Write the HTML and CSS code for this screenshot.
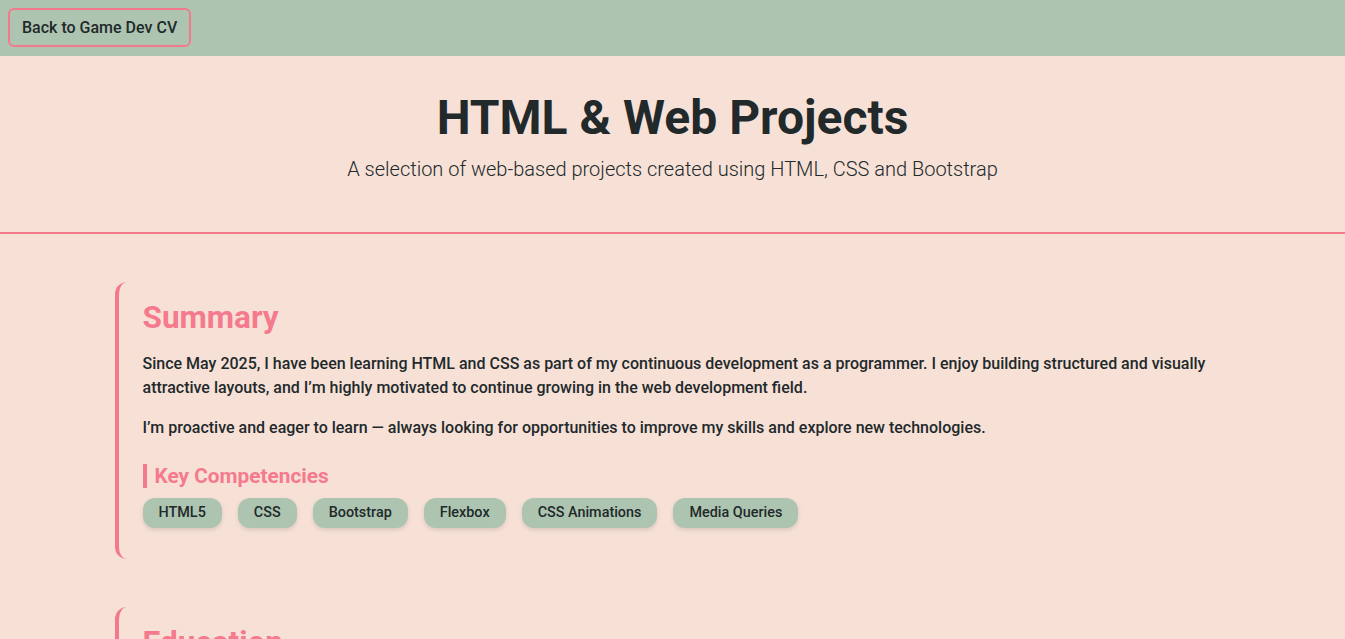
FILE: index.html
```html
<!DOCTYPE html>
<html lang="en">
<head>
    <meta charset="UTF-8">
    <meta name="viewport" content="width=device-width, initial-scale=1.0">
    <title>HTML &amp; Web Projects</title>
    <link rel="stylesheet" href="styles.css">
</head>
<body>
    <!-- Top bar -->
    <nav class="top-bar">
        <a href="#" class="back-btn">Back to Game Dev CV</a>
    </nav>

    <!-- Page header -->
    <header class="page-header">
        <h1>HTML &amp; Web Projects</h1>
        <p class="lead">A selection of web-based projects created using HTML, CSS and Bootstrap</p>
    </header>

    <main class="container">
        <!-- Summary -->
        <section class="cv-section">
            <h2>Summary</h2>
            <p>Since May 2025, I have been learning HTML and CSS as part of my continuous development as a programmer. I enjoy building structured and visually attractive layouts, and I’m highly motivated to continue growing in the web development field.</p>
            <p>I’m proactive and eager to learn — always looking for opportunities to improve my skills and explore new technologies.</p>

            <h3>Key Competencies</h3>
            <ul class="tags">
                <li>HTML5</li>
                <li>CSS</li>
                <li>Bootstrap</li>
                <li>Flexbox</li>
                <li>CSS Animations</li>
                <li>Media Queries</li>
            </ul>
        </section>

        <!-- Education -->
        <section class="cv-section">
            <h2>Education</h2>
            <p>Self-taught web development through online courses and personal projects.</p>
        </section>
    </main>
</body>
</html>
```

FILE: styles.css
```css
body {
    font-family: 'Roboto', 'Liberation Sans', sans-serif;
    background-color: #f7e1d7;
    color: #22292b;
    margin: 0;
    padding: 0;
}
.top-bar {
    background-color: #adc5b0;
    height: 56px;
    padding: 8px;
    box-sizing: border-box;
}
.back-btn {
    display: inline-block;
    padding: 8px 12px;
    border: 2px solid #f27a8c;
    border-radius: 6px;
    color: #22292b;
    font-size: 16px;
    font-weight: 500;
    line-height: 19px;
    text-decoration: none;
}
.page-header {
    text-align: center;
    padding: 33px 0 48px;
    border-bottom: 2px solid #f27a8c;
}
.page-header h1 {
    margin: 0 0 7px;
    font-size: 48px;
    font-weight: 700;
    line-height: 1.2;
}
.page-header .lead {
    margin: 0;
    font-size: 20px;
    font-weight: 300;
    line-height: 1.5;
}
.container {
    max-width: 1140px;
    margin: 0 auto;
    padding: 0 12px;
    box-sizing: border-box;
}
.cv-section {
    margin-top: 48px;
    padding: 17px 24px 15px;
    border-left: 4px solid #f27a8c;
    border-radius: 12px;
}
.cv-section h2 {
    color: #f57a8d;
    font-size: 31.5px;
    font-weight: 700;
    line-height: 1.2;
    margin: 0 0 16px;
}
.cv-section p {
    font-size: 16px;
    font-weight: 500;
    line-height: 24px;
    margin: 0 0 16px;
}
.cv-section h3 {
    color: #f57a8d;
    font-size: 20.8px;
    font-weight: 700;
    line-height: 24px;
    margin: 24px 0 10px;
    padding-left: 8px;
    border-left: 4px solid #f27a8c;
}
.tags {
    list-style: none;
    display: flex;
    flex-wrap: wrap;
    gap: 16px;
    margin: 0 0 16px;
    padding: 0;
}
.tags li {
    background-color: #adc5b0;
    border-radius: 12px;
    padding: 6px 16px;
    font-size: 14.4px;
    font-weight: 500;
    line-height: 18px;
    box-shadow: 0 2px 4px rgba(0, 0, 0, 0.12);
}
```
